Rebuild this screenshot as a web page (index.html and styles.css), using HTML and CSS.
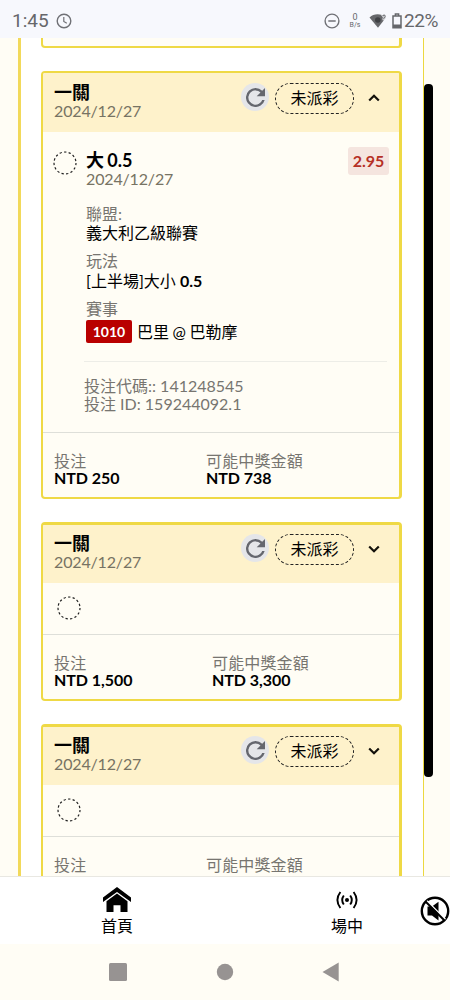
FILE: index.html
```html
<!DOCTYPE html>
<html lang="zh-Hant">
<head>
<meta charset="utf-8">
<meta name="viewport" content="width=device-width, initial-scale=1">
<title>投注</title>
<link rel="stylesheet" href="styles.css">
</head>
<body>
<svg class="defs" width="0" height="0">
  <symbol id="refresh" viewBox="4 4 16 16"><path fill="#65676e" d="M17.65 6.35A7.96 7.96 0 0 0 12 4a8 8 0 1 0 7.73 10h-2.08A6 6 0 1 1 12 6c1.66 0 3.14.69 4.22 1.78L13 11h7V4z"/></symbol>
  <symbol id="down" viewBox="0 0 12 8"><path d="M1.2 1.5L6 6.3L10.8 1.5" fill="none" stroke="#15130c" stroke-width="2.2"/></symbol>
  <symbol id="up" viewBox="0 0 12 8"><path d="M1.2 6.5L6 1.7L10.8 6.5" fill="none" stroke="#15130c" stroke-width="2.2"/></symbol>
  <symbol id="ring" viewBox="0 0 24 24"><circle cx="12" cy="12" r="11" fill="none" stroke="#222" stroke-width="1.2" stroke-dasharray="2.3 2.3"/></symbol>
</svg>
<div class="phone">
  <header class="status">
    <span class="time">1:45</span>
    <svg class="clock" width="16" height="16" viewBox="0 0 16 16"><circle cx="8" cy="8" r="6.8" fill="none" stroke="#707176" stroke-width="1.4"/><path d="M7.8 4V8.4L10.8 10.2" fill="none" stroke="#707176" stroke-width="1.2"/></svg>
    <span class="spacer"></span>
    <svg class="dnd" width="16" height="16" viewBox="0 0 16 16"><circle cx="8" cy="8" r="6.9" fill="none" stroke="#707176" stroke-width="1.4"/><path d="M4.3 8H11.7" stroke="#707176" stroke-width="1.5"/></svg>
    <span class="rate"><span class="rate-n">0</span><span class="rate-u">B/s</span></span>
    <svg class="wifi" width="18" height="16" viewBox="0 0 18 16"><path d="M0.5 4.5C5 .2 12 .2 17 4.5L9 14.8Z" fill="#66676b"/><circle cx="8.8" cy="7" r="2.8" fill="#404145"/><path d="M13 3.2Q16 .8 16.4 3.4Q16.3 4.7 14.8 5.5V7.2" fill="none" stroke="#f7f8fd" stroke-width="2.4"/><path d="M13.4 3.2Q15.8 1 16.2 3.4Q16.1 4.6 14.8 5.4V6.6" fill="none" stroke="#77787c" stroke-width="1.1"/></svg>
    <svg class="batt" width="10" height="16" viewBox="0 0 10 16"><path d="M1 3H9V14.8H1ZM3.4 3V1H6.6V3" fill="none" stroke="#66676b" stroke-width="1.5"/><path d="M1 11.5H9V15H1Z" fill="#66676b"/></svg>
    <span class="pct">22%</span>
  </header>

  <main class="view">
    <section class="panel">
      <div class="card card-tail"></div>

      <article class="card">
        <div class="head">
          <div class="who"><b class="title">一關</b><span class="date">2024/12/27</span></div>
          <span class="reload"><svg width="19" height="19"><use href="#refresh"/></svg></span>
          <span class="pill">未派彩</span>
          <svg class="chev" width="12" height="8"><use href="#up"/></svg>
        </div>
        <div class="bet">
          <svg class="ring" width="24" height="24"><use href="#ring"/></svg>
          <div class="info">
            <div class="pick"><div class="who"><b class="title">大 0.5</b><span class="date">2024/12/27</span></div><span class="odds">2.95</span></div>
            <div class="field league"><span class="label">聯盟:</span><span class="value">義大利乙級聯賽</span></div>
            <div class="field"><span class="label">玩法</span><span class="value">[上半場]大小 <b>0.5</b></span></div>
            <div class="field"><span class="label">賽事</span><span class="value match"><b class="code">1010</b><span class="teams">巴里 @ 巴勒摩</span></span></div>
            <div class="ids"><span>投注代碼:: 141248545</span><span>投注 ID: 159244092.1</span></div>
          </div>
        </div>
        <div class="foot">
          <div class="sum"><span>投注</span><b>NTD 250</b></div>
          <div class="sum"><span>可能中獎金額</span><b>NTD 738</b></div>
        </div>
      </article>

      <article class="card folded">
        <div class="head">
          <div class="who"><b class="title">一關</b><span class="date">2024/12/27</span></div>
          <span class="reload"><svg width="19" height="19"><use href="#refresh"/></svg></span>
          <span class="pill">未派彩</span>
          <svg class="chev" width="12" height="8"><use href="#down"/></svg>
        </div>
        <div class="mini"><svg width="24" height="24"><use href="#ring"/></svg></div>
        <div class="foot wide">
          <div class="sum"><span>投注</span><b>NTD 1,500</b></div>
          <div class="sum"><span>可能中獎金額</span><b>NTD 3,300</b></div>
        </div>
      </article>

      <article class="card folded">
        <div class="head">
          <div class="who"><b class="title">一關</b><span class="date">2024/12/27</span></div>
          <span class="reload"><svg width="19" height="19"><use href="#refresh"/></svg></span>
          <span class="pill">未派彩</span>
          <svg class="chev" width="12" height="8"><use href="#down"/></svg>
        </div>
        <div class="mini"><svg width="24" height="24"><use href="#ring"/></svg></div>
        <div class="foot">
          <div class="sum"><span>投注</span></div>
          <div class="sum"><span>可能中獎金額</span></div>
        </div>
      </article>
    </section>
    <div class="track"><div class="thumb"></div></div>
  </main>

  <nav class="tabs">
    <a class="tab home"><svg width="28" height="26" viewBox="0 0 28 26"><path d="M14 0L28 10.5V15L14 5L0 15V10.5Z"/><path d="M14 6.5L24.5 14.3V25H17.5V18.3H10.5V25H3.5V14.3Z"/></svg><span>首頁</span></a>
    <a class="tab live"><svg width="22" height="18" viewBox="0 0 22 18"><circle cx="11" cy="9" r="2"/><g fill="none" stroke="#000" stroke-width="1.9"><path d="M7.8 4.5Q4.6 9 7.8 13.5M14.2 4.5Q17.4 9 14.2 13.5M4.4 1Q-1.6 9 4.4 17M17.6 1Q23.6 9 17.6 17"/></g></svg><span>場中</span></a>
    <svg class="mute" width="30" height="30" viewBox="0 0 30 30"><circle cx="15" cy="15" r="13.2" fill="none" stroke="#000" stroke-width="2.4"/><path d="M7.5 10.5H12L18.5 5.7V24.5L12 19.5H7.5Z"/><path d="M6.8 4.8L25.4 23.4" stroke="#fff" stroke-width="1.5"/><path d="M5.5 5.5L24.5 24.5" stroke="#000" stroke-width="2"/></svg>
  </nav>

  <footer class="system">
    <svg width="18" height="18"><rect width="18" height="18" rx="1.5" fill="#979392"/></svg>
    <svg width="18" height="18"><circle cx="9" cy="9" r="8.2" fill="#979392"/></svg>
    <svg width="18" height="20"><path d="M.5 10L16.7 .5V19.5Z" fill="#979392"/></svg>
  </footer>
</div>
</body>
</html>
```
FILE: styles.css
```css
* { box-sizing: border-box; }
body { margin: 0; background: #fffdf5; font-family: Lato, "Noto Sans CJK TC", sans-serif; font-size: 16px; color: #000; }
.defs { display: block; }
.phone { width: 450px; height: 1000px; display: flex; flex-direction: column; overflow: hidden; }

.status { height: 38px; flex: none; display: flex; align-items: center; padding: 3px 11px 0 12px; background: #f7f8fd; color: #66676b; font-family: Roboto, sans-serif; font-size: 19px; }
.time { width: 44px; }
.spacer { flex: 1; }
.dnd { margin-right: 9px; }
.rate { width: 12px; display: flex; flex-direction: column; align-items: center; font-size: 8px; line-height: 8px; margin-right: 8px; }
.rate-n { font-size: 9px; }
.rate-u { font-size: 7px; }
.wifi { margin-right: 5px; }
.batt { margin-right: 2px; }
.pct { width: 35px; font-size: 19px; letter-spacing: -0.4px; }

.view { height: 838px; flex: none; display: flex; overflow: hidden; padding-left: 18px; }
.panel { width: 406px; flex: none; border-left: 3px solid #f2d95a; border-right: 1px solid #ecd840; background: #fff; padding: 0 22px 0 20px; }
.track { padding-top: 46px; }
.thumb { width: 9px; height: 693px; border-radius: 4px; background: #000; }

.card { width: 361px; border: solid #efd945; border-width: 2px 3px 2px 2px; border-radius: 4px; background: #fffdf5; margin-bottom: 23px; overflow: hidden; }
.card-tail { height: 10px; border-top: 0; border-radius: 0 0 4px 4px; }
.folded { border-top-width: 3px; }
.folded .head { height: 58px; padding-top: 8px; }
.head { height: 59px; display: flex; align-items: flex-start; background: #fef2cb; padding: 9px 0 0 11px; }
.who { width: 187px; display: flex; flex-direction: column; }
.title { height: 20px; font-size: 18px; line-height: 20px; white-space: nowrap; }
.date { height: 20px; line-height: 20px; color: #777363; letter-spacing: -0.15px; }
.head .date { margin-top: -1px; }
.reload { width: 28px; height: 28px; margin-top: 1px; display: flex; align-items: center; justify-content: center; border-radius: 50%; background: #e5e6e9; }
.pill { width: 79px; height: 31px; margin: 1px 14px 0 6px; border: 1px dashed #222; border-radius: 16px; text-align: center; line-height: 28px; }
.chev { margin-top: 12px; }

.bet { display: flex; padding: 18px 10px 0 10px; height: 300px; }
.ring { margin: 1px 9px 0 0; }
.info { flex: 1; }
.info .date { height: 18px; line-height: 18px; }
.info .title { word-spacing: -1px; }
.pick { display: flex; justify-content: space-between; height: 38px; }
.odds { width: 41px; height: 28px; margin-top: -3px; border-radius: 3px; background: #f5e5df; color: #b53025; font-weight: 700; line-height: 28px; text-align: center; }
.field { display: flex; flex-direction: column; margin-top: 9px; }
.league { margin-top: 17px; }
.label { height: 19px; line-height: 18px; color: #777570; }
.league .label { height: 18px; }
.value { height: 20px; line-height: 20px; }
.match { height: 24px; display: flex; align-items: center; gap: 5px; padding-top: 1px; }
.teams { word-spacing: -0.5px; }
.code { width: 46px; height: 23px; border-radius: 2px; background: #b90000; color: #fff; text-align: center; line-height: 23px; font-size: 14px; }
.ids { margin: 18px 2px 0 -2px; border-top: 1px solid #ededE7; padding-top: 15px; display: flex; flex-direction: column; color: #777570; }
.ids span { height: 18px; line-height: 18px; }

.mini { height: 51px; padding: 13px 0 0 14px; }
.foot { height: 65px; border-top: 1px solid #dedfd9; display: flex; padding: 19px 0 0 11px; }
.sum { width: 152px; display: flex; flex-direction: column; }
.wide .sum { width: 158px; }
.sum span, .sum b { height: 18px; line-height: 18px; white-space: nowrap; }
.sum b { margin-top: -1px; letter-spacing: -0.05px; }
.sum span { color: #777570; letter-spacing: 0.15px; }

.tabs { height: 68px; flex: none; border-top: 1px solid #e9e8e2; background: #fff; display: flex; align-items: flex-start; }
.tab { display: flex; flex-direction: column; align-items: center; width: 60px; }
.home { margin-left: 87px; padding-top: 10px; }
.live { margin-left: 170px; padding-top: 14px; }
.live span { margin-top: 8px; }
.tab span { height: 26px; line-height: 26px; }
.tab.live span { line-height: 18px; }
.mute { margin: 19px 0 0 43px; flex: none; }

.system { flex: 1; display: flex; align-items: center; padding-left: 109px; gap: 89px; }
.system svg:last-child { margin-left: -1px; }
```
